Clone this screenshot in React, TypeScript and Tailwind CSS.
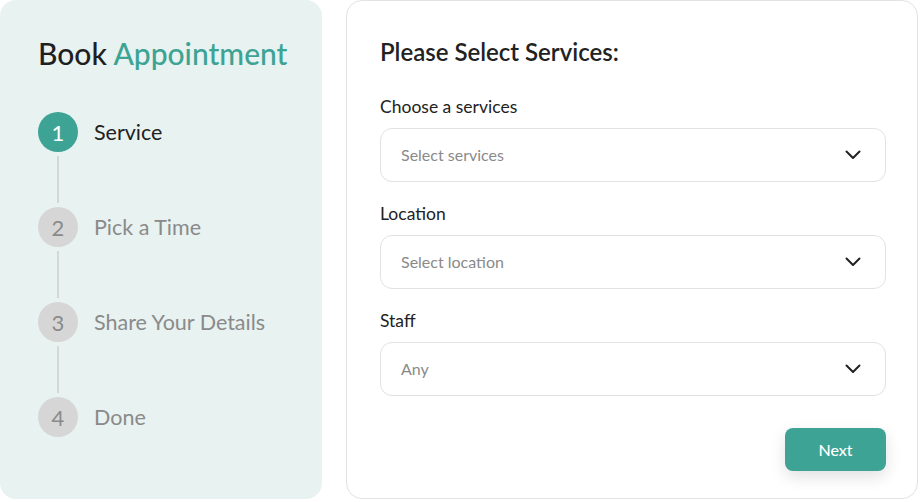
const steps = [
  { n: 1, label: 'Service', active: true },
  { n: 2, label: 'Pick a Time', active: false },
  { n: 3, label: 'Share Your Details', active: false },
  { n: 4, label: 'Done', active: false },
]

function Chevron() {
  return (
    <svg width="16" height="10" viewBox="0 0 16 10" fill="none" stroke="#222" strokeWidth="2" strokeLinecap="round" strokeLinejoin="round">
      <path d="M1.5 1.5 8 8l6.5-6.5" />
    </svg>
  )
}

function SelectBox({ label, placeholder }: { label: string; placeholder: string }) {
  return (
    <div>
      <p className="text-[17.5px] text-[#222] leading-[22px] mb-[10px]">{label}</p>
      <div className="h-[54px] rounded-xl border border-[#e2e2e2] flex items-center justify-between pl-[20px] pr-[24px]">
        <span className="text-[16px] text-[#8a8a8a]">{placeholder}</span>
        <Chevron />
      </div>
    </div>
  )
}

export default function App() {
  return (
    <div className="w-[920px] h-[502px] bg-white flex gap-6 font-['Lato',sans-serif]">
      <div className="w-[322px] h-[499px] rounded-2xl bg-[#e8f2f0] pl-[38px] pt-[34px]">
        <h1 className="text-[30px] font-medium leading-[38px] text-[#1f1f1f]">
          Book <span className="text-[#3da394]">Appointment</span>
        </h1>
        <div className="mt-[40px] flex flex-col">
          {steps.map((s, i) => (
            <div key={s.n}>
              <div className="flex items-center gap-4">
                <div
                  className={
                    s.active
                      ? 'w-10 h-10 rounded-full bg-[#3da394] text-white flex items-center justify-center text-[22px]'
                      : 'w-10 h-10 rounded-full bg-[#d6d6d6] text-[#8a8a8a] flex items-center justify-center text-[22px]'
                  }
                >
                  {s.n}
                </div>
                <span className={s.active ? 'text-[21.5px] text-[#222]' : 'text-[21.5px] text-[#8a8a8a]'}>{s.label}</span>
              </div>
              {i < steps.length - 1 && (
                <div className="w-10 flex justify-center py-[4px]">
                  <div className="w-[2px] h-[47px] bg-[#d6d6d6]" />
                </div>
              )}
            </div>
          ))}
        </div>
      </div>
      <div className="w-[572px] h-[499px] rounded-2xl border border-[#e2e2e2] pl-[33px] pr-[31px] pt-[36px]">
        <h2 className="text-[24px] font-semibold text-[#222] leading-[30px]">Please Select Services:</h2>
        <div className="mt-[29px] flex flex-col gap-[21px]">
          <SelectBox label="Choose a services" placeholder="Select services" />
          <SelectBox label="Location" placeholder="Select location" />
          <SelectBox label="Staff" placeholder="Any" />
        </div>
        <div className="flex justify-end mt-[32px]">
          <button className="w-[101px] h-[43px] rounded-lg bg-[#3da394] text-white text-[16px] font-medium shadow-[0_6px_16px_rgba(0,0,0,0.12)]">
            Next
          </button>
        </div>
      </div>
    </div>
  )
}
